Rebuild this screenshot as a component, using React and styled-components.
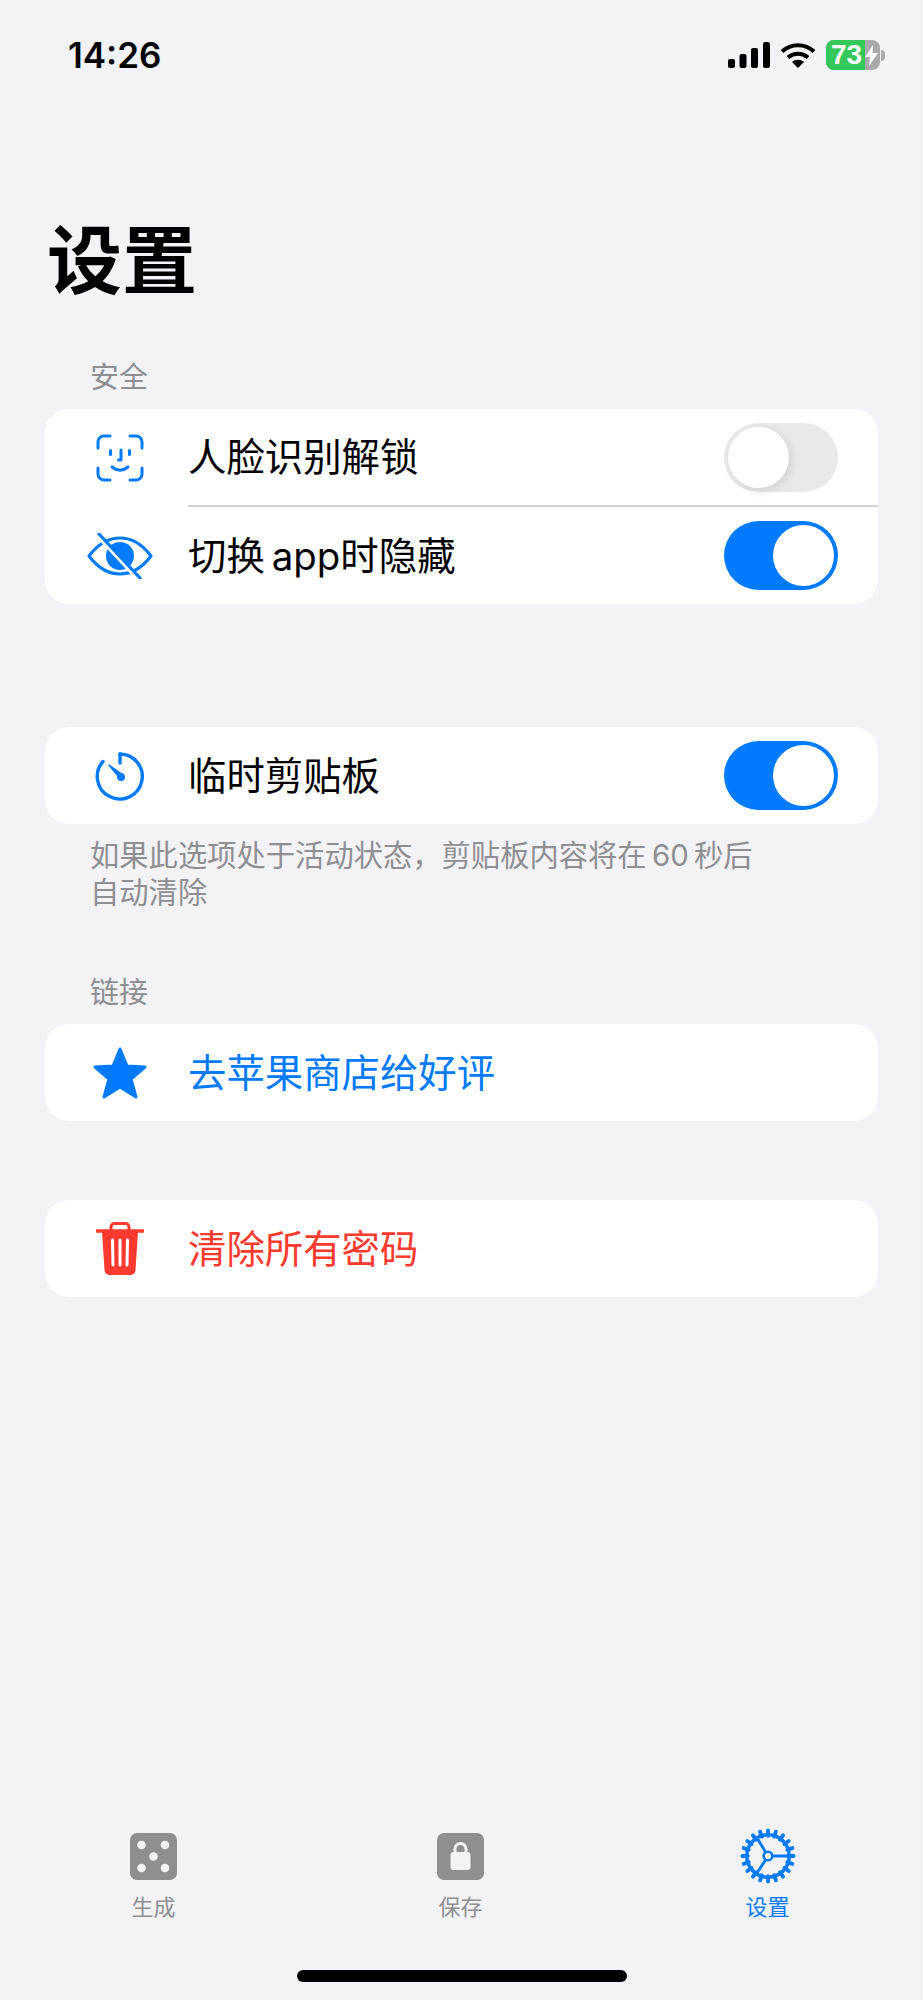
import styled, { createGlobalStyle } from "styled-components"

const Global = createGlobalStyle`
    html, body {
        margin: 0;
        padding: 0;
        background: #f2f2f7;
    }
    * {
        box-sizing: border-box;
    }
`

const BLUE = "#007aff"
const RED = "#ff3b30"
const GREY = "#8e8e93"

const Page = styled.div`
    width: 923px;
    height: 2000px;
    background: #f2f2f7;
    display: flex;
    flex-direction: column;
    font-family: Inter, "Noto Sans CJK SC", "Noto Sans", sans-serif;
    overflow: hidden;
`

const StatusBar = styled.div`
    height: 110px;
    padding: 34px 38px 0 68px;
    display: flex;
    justify-content: space-between;
    align-items: flex-start;
`

const Time = styled.span`
    font-family: Inter, sans-serif;
    font-weight: 600;
    font-size: 35px;
    line-height: 42px;
    color: #000;
`

const StatusIcons = styled.div`
    display: flex;
    align-items: center;
    gap: 10px;
    height: 42px;
`

const Battery = styled.div`
    position: relative;
    width: 54px;
    height: 30px;
    border-radius: 8px;
    overflow: hidden;
    background: #a9a9ae;
    display: flex;
    align-items: center;
    margin-right: 5px;
`

const BatteryFill = styled.div`
    width: 39px;
    height: 100%;
    background: #34c759;
`

const BatteryText = styled.span`
    position: absolute;
    left: 5px;
    top: 0;
    font-family: "Liberation Sans", sans-serif;
    font-weight: 700;
    font-size: 28px;
    line-height: 30px;
    color: #fff;
`

const BatteryBolt = styled.svg`
    position: absolute;
    right: 2px;
    top: 5px;
`

const BatteryNub = styled.div`
    width: 4px;
    height: 11px;
    background: #a9a9ae;
    border-radius: 0 4px 4px 0;
    margin-left: -14px;
`

const Title = styled.h1`
    margin: 99px 0 0 47px;
    font-size: 75px;
    line-height: 104px;
    font-weight: 700;
    color: #000;
`

const Content = styled.div`
    padding: 0 45px;
    display: flex;
    flex-direction: column;
`

const SectionLabel = styled.div`
    margin: ${(p) => p.$top}px 0 0 45px;
    height: 55px;
    font-size: 29px;
    line-height: 47px;
    color: ${GREY};
`

const Card = styled.div`
    margin-top: ${(p) => p.$top || 0}px;
    background: #fff;
    border-radius: 24px;
    overflow: hidden;
`

const Row = styled.div`
    display: flex;
    height: ${(p) => p.$h || 97}px;
    padding-left: 30px;
`

const IconSlot = styled.div`
    width: 90px;
    margin-right: 23px;
    display: flex;
    align-items: center;
    justify-content: center;
    flex-shrink: 0;
`

const RowBody = styled.div`
    flex: 1;
    display: flex;
    align-items: center;
    justify-content: space-between;
    padding-right: 40px;
    border-bottom: ${(p) => (p.$divider ? "2px solid #d1d1d6" : "none")};
`

const RowText = styled.span`
    font-size: 38.4px;
    line-height: 50px;
    color: ${(p) => p.$color || "#000"};
`

const Toggle = styled.div`
    width: 114px;
    height: 69px;
    border-radius: 35px;
    padding: 4px;
    background: ${(p) => (p.$on ? BLUE : "#e9e9ea")};
    display: flex;
    justify-content: ${(p) => (p.$on ? "flex-end" : "flex-start")};
`

const Knob = styled.div`
    width: 61px;
    height: 61px;
    border-radius: 50%;
    background: #fff;
    box-shadow: ${(p) => (p.$on ? "none" : "3px 3px 10px rgba(0,0,0,0.1)")};
`

const Footnote = styled.div`
    margin: 13px 0 0 45px;
    width: 700px;
    font-size: 29.3px;
    line-height: 37px;
    color: ${GREY};
`

const TabBar = styled.div`
    margin-top: auto;
    display: flex;
    height: 118px;
`

const Tab = styled.div`
    width: 307px;
    display: flex;
    flex-direction: column;
    align-items: center;
    color: ${(p) => (p.$active ? BLUE : GREY)};
`

const TabIcon = styled.div`
    height: 60px;
    display: flex;
    align-items: center;
    justify-content: center;
`

const TabLabel = styled.span`
    margin-top: 6px;
    font-size: 22px;
    line-height: 30px;
`

const HomeBar = styled.div`
    height: 56px;
    display: flex;
    justify-content: center;
    padding: 26px 0 0 0;
`

const HomeIndicator = styled.div`
    width: 330px;
    height: 12px;
    border-radius: 6px;
    background: #000;
`

const FaceIdIcon = () => (
    <svg width="48" height="48" viewBox="0 0 48 48" fill="none" stroke={BLUE} strokeWidth="3" strokeLinecap="round" strokeLinejoin="round">
        <path d="M2 14V8a6 6 0 0 1 6-6h6M34 2h6a6 6 0 0 1 6 6v6M46 34v6a6 6 0 0 1-6 6h-6M14 46H8a6 6 0 0 1-6-6v-6" />
        <path d="M14.500 16.500v4M33.500 16.500v4M25 16v10h-2.500M16 33c5 4 11 4 16 0" />
    </svg>
)

const EyeIcon = () => (
    <svg width="66" height="46" viewBox="0 0 66 46" fill="none">
        <path d="M2 23C11 11 21 5 33 5s22 6 31 18c-9 12-19 18-31 18S11 35 2 23Z" stroke={BLUE} strokeWidth="3.200" strokeLinejoin="round" />
        <circle cx="33" cy="23" r="14" fill={BLUE} />
        <path d="M9 1 L50 45" stroke="#fff" strokeWidth="4" />
        <path d="M12 1 L53 45" stroke={BLUE} strokeWidth="3.200" strokeLinecap="round" />
    </svg>
)

const TimerIcon = () => (
    <svg width="50" height="50" viewBox="0 0 50 50" fill="none">
        <path d="M25 3a22.500 22.500 0 1 1-17 7.500" stroke={BLUE} strokeWidth="3.400" strokeLinecap="round" />
        <path d="M25 3v9" stroke={BLUE} strokeWidth="3.400" strokeLinecap="round" />
        <path d="M14 14 L28 24 L25 27.500 Z" fill={BLUE} stroke={BLUE} strokeWidth="1.500" strokeLinejoin="round" />
        <circle cx="26" cy="26" r="4" fill={BLUE} />
    </svg>
)

const StarIcon = () => (
    <svg width="56" height="54" viewBox="0 0 56 54">
        <path d="M28 3 L35 20 L53 21 L39 33 L44 51 L28 41 L12 51 L17 33 L3 21 L21 20 Z" fill={BLUE} stroke={BLUE} strokeWidth="3" strokeLinejoin="round" />
    </svg>
)

const TrashIcon = () => (
    <svg width="48" height="54" viewBox="0 0 48 54">
        <path d="M15 8V5a3.500 3.500 0 0 1 3.500-3.500h11A3.500 3.500 0 0 1 33 5v3" fill="none" stroke={RED} strokeWidth="3" />
        <path d="M1 9h46" stroke={RED} strokeWidth="3.400" strokeLinecap="round" />
        <path d="M6 10h36l-2.500 38a5 5 0 0 1-5 5h-21a5 5 0 0 1-5-5Z" fill={RED} />
        <path d="M16.500 18l.5 25M24 18v25M31.500 18l-.5 25" stroke="#fff" strokeWidth="3" strokeLinecap="round" />
    </svg>
)

const DiceIcon = () => (
    <svg width="47" height="47" viewBox="0 0 47 47">
        <rect width="47" height="47" rx="7" fill={GREY} />
        <circle cx="11.500" cy="12" r="4.300" fill="#f2f2f7" />
        <circle cx="35" cy="12" r="4.300" fill="#f2f2f7" />
        <circle cx="23.500" cy="23.500" r="4.300" fill="#f2f2f7" />
        <circle cx="11.500" cy="35" r="4.300" fill="#f2f2f7" />
        <circle cx="35" cy="35" r="4.300" fill="#f2f2f7" />
    </svg>
)

const LockIcon = () => (
    <svg width="47" height="47" viewBox="0 0 47 47">
        <rect width="47" height="47" rx="7" fill={GREY} />
        <path d="M18 20v-4a5.500 5.500 0 0 1 11 0v4" fill="none" stroke="#f2f2f7" strokeWidth="3" />
        <rect x="13.500" y="19" width="20" height="18" rx="3" fill="#f2f2f7" />
    </svg>
)

const GearIcon = () => (
    <svg width="56" height="56" viewBox="0 0 58 58" fill="none" stroke={BLUE}>
        {Array.from({ length: 20 }).map((_, i) => (
            <path key={i} d="M29 2.500V8" strokeWidth="4" strokeLinecap="round" transform={`rotate(${i * 18} 29 29)`} />
        ))}
        <circle cx="29" cy="29" r="22" strokeWidth="3.600" />
        <circle cx="29" cy="29" r="4.500" strokeWidth="2.600" />
        <path d="M33.500 29H50M26.500 25L17 9M26.500 33L16 49" strokeWidth="3" />
    </svg>
)

const App = () => {
    return (
        <Page>
            <Global />
            <StatusBar>
                <Time>14:26</Time>
                <StatusIcons>
                    <svg width="42" height="26" viewBox="0 0 42 26" fill="#000">
                        <rect x="0" y="17" width="7" height="9" rx="2" />
                        <rect x="11.500" y="12" width="7" height="14" rx="2" />
                        <rect x="23" y="6" width="7" height="20" rx="2" />
                        <rect x="35" y="0" width="7" height="26" rx="2" />
                    </svg>
                    <svg width="36" height="26" viewBox="0 0 36 26" fill="none" stroke="#000" strokeWidth="4">
                        <path d="M2 9.500C11 1 25 1 34 9.500M8 15.500c6-5 14-5 20 0" />
                        <path d="M18 26l-6-6c3.500-3 8.500-3 12 0Z" fill="#000" stroke="none" />
                    </svg>
                    <Battery>
                        <BatteryFill />
                        <BatteryText>73</BatteryText>
                        <BatteryBolt width="13" height="21" viewBox="0 0 13 21" fill="#fff">
                            <path d="M8 0L0 12h5l-1 9 9-13H7.500Z" />
                        </BatteryBolt>
                    </Battery>
                    <BatteryNub />
                </StatusIcons>
            </StatusBar>
            <Title>设置</Title>
            <Content>
                <SectionLabel $top={41}>安全</SectionLabel>
                <Card>
                    <Row $h={98}>
                        <IconSlot><FaceIdIcon /></IconSlot>
                        <RowBody $divider>
                            <RowText>人脸识别解锁</RowText>
                            <Toggle><Knob /></Toggle>
                        </RowBody>
                    </Row>
                    <Row>
                        <IconSlot><EyeIcon /></IconSlot>
                        <RowBody>
                            <RowText>切换{"\u2009"}app时隐藏</RowText>
                            <Toggle $on><Knob $on /></Toggle>
                        </RowBody>
                    </Row>
                </Card>
                <Card $top={123}>
                    <Row>
                        <IconSlot><TimerIcon /></IconSlot>
                        <RowBody>
                            <RowText>临时剪贴板</RowText>
                            <Toggle $on><Knob $on /></Toggle>
                        </RowBody>
                    </Row>
                </Card>
                <Footnote>如果此选项处于活动状态，剪贴板内容将在{"\u2009"}60{"\u2009"}秒后<br />自动清除</Footnote>
                <SectionLabel $top={58}>链接</SectionLabel>
                <Card>
                    <Row>
                        <IconSlot><StarIcon /></IconSlot>
                        <RowBody>
                            <RowText $color={BLUE}>去苹果商店给好评</RowText>
                        </RowBody>
                    </Row>
                </Card>
                <Card $top={79}>
                    <Row>
                        <IconSlot><TrashIcon /></IconSlot>
                        <RowBody>
                            <RowText $color={RED}>清除所有密码</RowText>
                        </RowBody>
                    </Row>
                </Card>
            </Content>
            <TabBar>
                <Tab>
                    <TabIcon><DiceIcon /></TabIcon>
                    <TabLabel>生成</TabLabel>
                </Tab>
                <Tab>
                    <TabIcon><LockIcon /></TabIcon>
                    <TabLabel>保存</TabLabel>
                </Tab>
                <Tab $active>
                    <TabIcon><GearIcon /></TabIcon>
                    <TabLabel>设置</TabLabel>
                </Tab>
            </TabBar>
            <HomeBar><HomeIndicator /></HomeBar>
        </Page>
    )
}

export default App
